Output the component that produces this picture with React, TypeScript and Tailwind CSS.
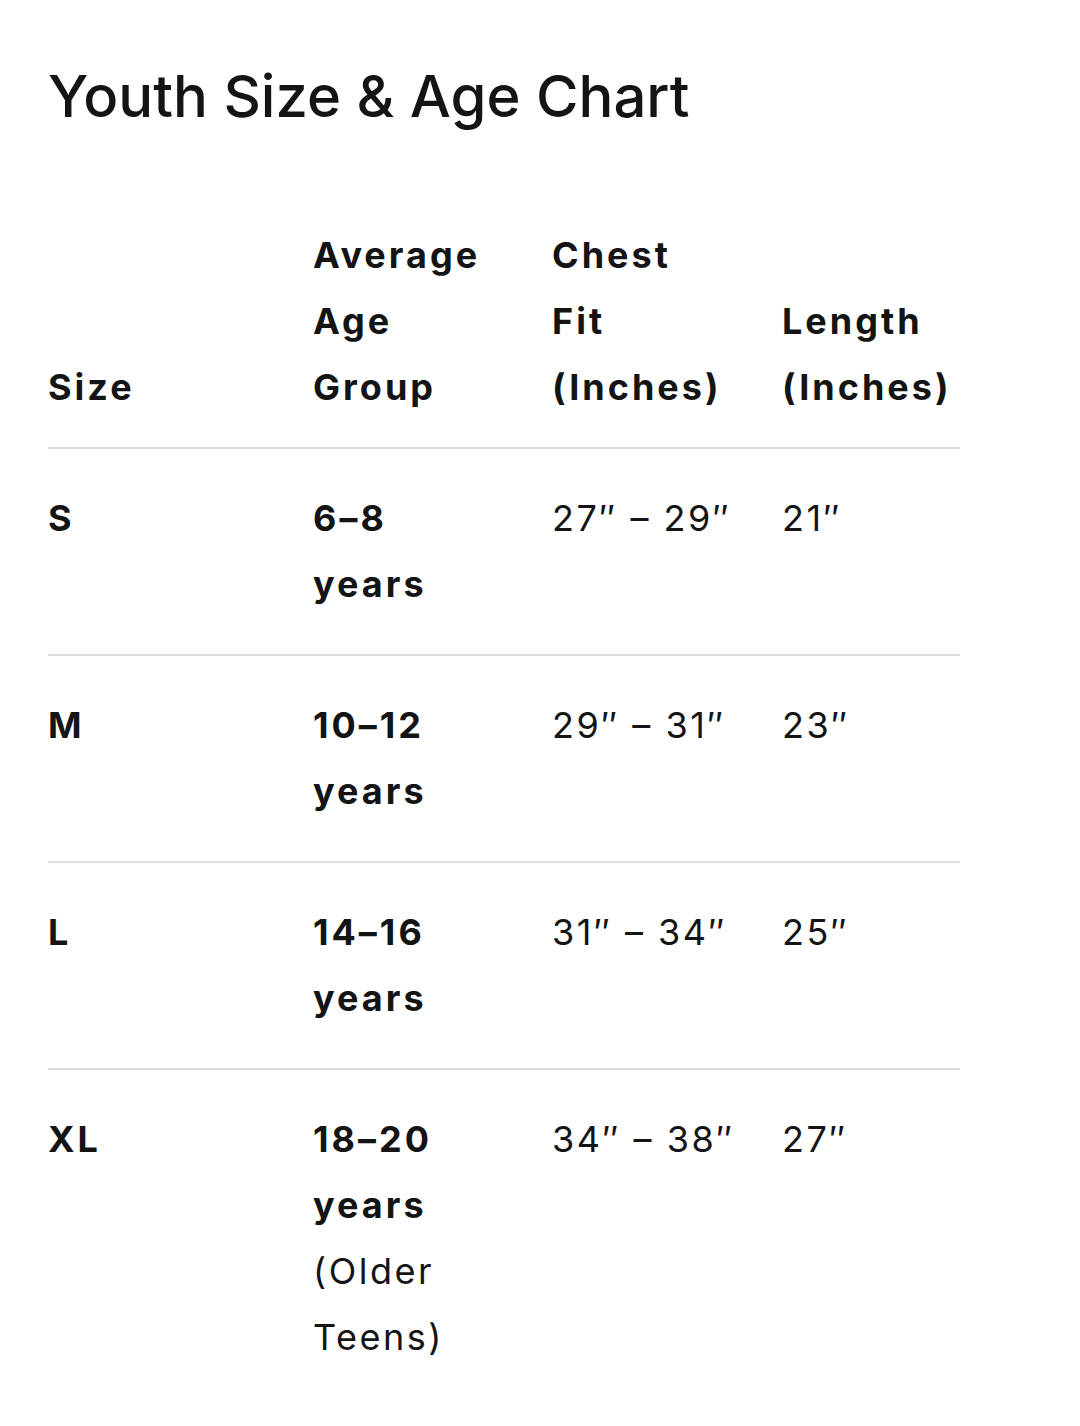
import React from 'react';

const rows = [
  { size: 'S', age: ['6–8', 'years'], note: [] as string[], chest: '27″ – 29″', length: '21″' },
  { size: 'M', age: ['10–12', 'years'], note: [], chest: '29″ – 31″', length: '23″' },
  { size: 'L', age: ['14–16', 'years'], note: [], chest: '31″ – 34″', length: '25″' },
  { size: 'XL', age: ['18–20', 'years'], note: ['(Older', 'Teens)'], chest: '34″ – 38″', length: '27″' },
];

const cols = 'grid grid-cols-[265px_239px_230px_178px]';

export default function App() {
  return (
    <div className="min-h-[1426px] bg-white px-[48px] pt-[61px] text-[#141414] font-['Inter','Open_Sans',sans-serif]">
      <h1 className="text-[58px] leading-[70px] font-medium">
        Youth Size &amp; Age Chart
      </h1>

      <div className="mt-[91px] w-[912px] text-[36px] leading-[66px] tracking-[2.5px]">
        <div className={`${cols} items-end pb-[27px] font-bold tracking-[3px]`}>
          <div>Size</div>
          <div>Average<br />Age<br />Group</div>
          <div>Chest<br />Fit<br />(Inches)</div>
          <div>Length<br />(Inches)</div>
        </div>

        {rows.map((r) => (
          <div key={r.size} className={`${cols} border-t-2 border-[#dadce0] pt-[36px] pb-[37px]`}>
            <div className="font-bold tracking-[3px]">{r.size}</div>
            <div>
              {r.age.map((a) => (
                <div key={a} className="font-bold tracking-[3px]">{a}</div>
              ))}
              {r.note.map((n) => (
                <div key={n}>{n}</div>
              ))}
            </div>
            <div>{r.chest}</div>
            <div>{r.length}</div>
          </div>
        ))}
      </div>
    </div>
  );
}
